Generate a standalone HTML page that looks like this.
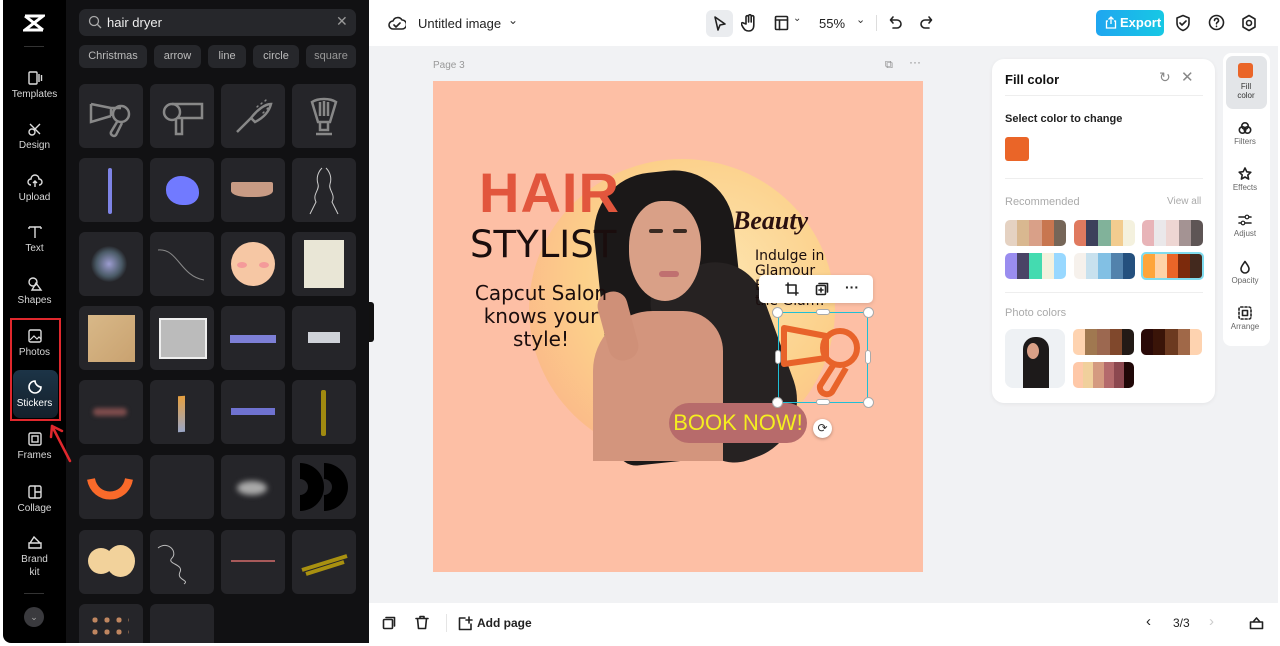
<!DOCTYPE html>
<html><head><meta charset="utf-8"><style>
*{box-sizing:border-box;margin:0;padding:0}
body{width:1280px;height:646px;overflow:hidden;background:#fff;font-family:"Liberation Sans",sans-serif;position:relative}
.a{position:absolute}
#side{left:3px;top:0;width:63px;height:643px;background:#000;border-radius:0 0 0 8px}
#panel{left:66px;top:0;width:303px;height:643px;background:#111113}
.nav{position:absolute;left:0;width:63px;text-align:center;color:#d8d8d8;font-size:10px}
.nav svg{display:block;margin:0 auto 3px}
.tile{position:absolute;width:64px;height:64px;background:#252529;border-radius:6px;overflow:hidden}
.chip{position:absolute;top:45px;height:23px;background:#26272b;border-radius:6px;color:#bbb;font-size:11px;line-height:23px;text-align:center}
#canvas{left:369px;top:46px;width:909px;height:557px;background:#f1f2f4}
#top{left:369px;top:0;width:909px;height:46px;background:#fff}
#bot{left:369px;top:603px;width:909px;height:40px;background:#fff}
.ic{stroke:#222;fill:none;stroke-width:1.6;stroke-linecap:round;stroke-linejoin:round}
.sw{position:absolute;height:26px;border-radius:5px;overflow:hidden;display:flex}
.sw i{flex:1}
.rt{position:absolute;left:0;width:44px;text-align:center;font-size:8px;color:#666}
.rt svg{display:block;margin:0 auto 2px}
</style></head><body>
<div class="a" id="side">
  <svg class="a" style="left:20px;top:13px" width="22" height="20" viewBox="0 0 22 20"><path d="M2 3h18L2 17h18M2 3l18 14" stroke="#fff" stroke-width="3" fill="none"/></svg>
  <div class="a" style="left:21px;top:46px;width:20px;height:1px;background:#333"></div>
  <div class="nav" style="top:70px"><svg width="16" height="16" viewBox="0 0 16 16"><rect x="2" y="2" width="8" height="12" rx="1" stroke="#ddd" fill="none" stroke-width="1.4"/><path d="M12 4v8M14.5 5v6" stroke="#ddd" stroke-width="1.4"/></svg>Templates</div>
  <div class="nav" style="top:121px"><svg width="16" height="16" viewBox="0 0 16 16"><circle cx="5" cy="11" r="3" stroke="#ddd" fill="none" stroke-width="1.4"/><path d="M3 3l10 10M13 3L7 9" stroke="#ddd" stroke-width="1.4"/></svg>Design</div>
  <div class="nav" style="top:173px"><svg width="16" height="16" viewBox="0 0 16 16"><path d="M4 12a3 3 0 010-6 4 4 0 018 0 3 3 0 010 6M8 14V8M6 10l2-2 2 2" stroke="#ddd" fill="none" stroke-width="1.4"/></svg>Upload</div>
  <div class="nav" style="top:224px"><svg width="16" height="16" viewBox="0 0 16 16"><path d="M2 3h12M8 3v11M2 3v2M14 3v2" stroke="#ddd" fill="none" stroke-width="1.4"/></svg>Text</div>
  <div class="nav" style="top:276px"><svg width="16" height="16" viewBox="0 0 16 16"><circle cx="6" cy="6" r="4" stroke="#ddd" fill="none" stroke-width="1.4"/><path d="M9 7l5 7H5z" stroke="#ddd" fill="none" stroke-width="1.4"/></svg>Shapes</div>
  <div class="a" style="left:7px;top:318px;width:51px;height:103px;border:2px solid #e0282d"></div>
  <div class="nav" style="top:328px"><svg width="16" height="16" viewBox="0 0 16 16"><rect x="2" y="2" width="12" height="12" rx="1.5" stroke="#ddd" fill="none" stroke-width="1.4"/><path d="M3 12l4-4 3 3 2-2 2 2" stroke="#ddd" fill="none" stroke-width="1.2"/></svg>Photos</div>
  <div class="a" style="left:10px;top:370px;width:45px;height:48px;border-radius:7px;background:linear-gradient(#1c3447,#14202b)"></div>
  <div class="nav" style="top:379px;color:#fff"><svg width="16" height="16" viewBox="0 0 16 16"><path d="M14 8a6 6 0 11-6-6c0 3 3 6 6 6z" stroke="#fff" fill="none" stroke-width="1.6"/></svg>Stickers</div>
  <div class="nav" style="top:431px"><svg width="16" height="16" viewBox="0 0 16 16"><rect x="2" y="2" width="12" height="12" rx="1.5" stroke="#ddd" fill="none" stroke-width="1.4"/><rect x="5" y="5" width="6" height="6" stroke="#ddd" fill="none" stroke-width="1.4"/></svg>Frames</div>
  <div class="nav" style="top:484px"><svg width="16" height="16" viewBox="0 0 16 16"><rect x="2" y="2" width="12" height="12" rx="1.5" stroke="#ddd" fill="none" stroke-width="1.4"/><path d="M8 2v12M8 8h6" stroke="#ddd" stroke-width="1.4"/></svg>Collage</div>
  <div class="nav" style="top:534px;line-height:13px"><svg width="16" height="16" viewBox="0 0 16 16"><path d="M2 9h12v5H2zM3 9l4-6 6 6" stroke="#ddd" fill="none" stroke-width="1.4"/></svg>Brand<br>kit</div>
  <div class="a" style="left:21px;top:593px;width:20px;height:1px;background:#333"></div>
  <div class="a" style="left:21px;top:607px;width:20px;height:20px;border-radius:50%;background:#3a3a3e;color:#aaa;font-size:9px;text-align:center;line-height:20px">⌄</div>
</div>
<div class="a" id="panel">
  <div class="a" style="left:13px;top:9px;width:277px;height:27px;background:#26272b;border-radius:7px"></div>
  <svg class="a" style="left:22px;top:15px" width="14" height="14" viewBox="0 0 14 14"><circle cx="6" cy="6" r="4.5" stroke="#aaa" fill="none" stroke-width="1.3"/><path d="M9.5 9.5L13 13" stroke="#aaa" stroke-width="1.3"/></svg>
  <div class="a" style="left:41px;top:15px;color:#eee;font-size:13px">hair dryer</div>
  <div class="a" style="left:270px;top:13px;color:#999;font-size:14px">✕</div>
  <div class="chip" style="left:13px;width:68px">Christmas</div>
  <div class="chip" style="left:88px;width:47px">arrow</div>
  <div class="chip" style="left:142px;width:38px">line</div>
  <div class="chip" style="left:187px;width:46px">circle</div>
  <div class="chip" style="left:240px;width:50px;color:#999">square</div>
</div>
<div class="tile" style="left:79px;top:84px"><svg width="64" height="64" viewBox="0 0 64 64" fill="none" stroke="#888" stroke-width="2.5"><path d="M12 20l20 4h10M12 20v18l20-6M32 24v8"/><circle cx="42" cy="30" r="8"/><path d="M38 38l-6 10a3 3 0 005 3l6-12"/></svg></div>
<div class="tile" style="left:150px;top:84px"><svg width="64" height="64" viewBox="0 0 64 64" fill="none" stroke="#888" stroke-width="2.5"><circle cx="22" cy="28" r="8"/><path d="M22 20h30v14H28M26 35v15h6V35"/></svg></div>
<div class="tile" style="left:221px;top:84px"><svg width="64" height="64" viewBox="0 0 64 64" fill="none" stroke="#888" stroke-width="2.5"><path d="M16 48l14-14M30 34c6-8 14-14 20-14-2 8-8 14-16 18z"/><path d="M36 22l1 1M40 19l1 1M44 16l1 1M46 24l1 1M42 28l1 1"/></svg></div>
<div class="tile" style="left:292px;top:84px"><svg width="64" height="64" viewBox="0 0 64 64" fill="none" stroke="#888" stroke-width="2.5"><path d="M20 18c6-4 18-4 24 0l-6 20H26zM28 18v14M32 17v15M36 18v14M28 38v8h8v-8M24 50h16"/></svg></div>
<div class="tile" style="left:79px;top:158px"><div class="a" style="left:29px;top:10px;width:4px;height:46px;background:#7e84e6;border-radius:2px"></div></div>
<div class="tile" style="left:150px;top:158px"><div class="a" style="left:16px;top:18px;width:33px;height:29px;background:#717aff;border-radius:45% 55% 40% 50%"></div></div>
<div class="tile" style="left:221px;top:158px"><div class="a" style="left:10px;top:24px;width:42px;height:15px;background:#c89b84;border-radius:2px 2px 40% 40%"></div></div>
<div class="tile" style="left:292px;top:158px"><svg width="64" height="64" viewBox="0 0 64 64" fill="none" stroke="#ccc" stroke-width="1"><path d="M30 10c-4 4-6 10-4 16s-6 10-2 18l-6 12M34 10c4 4 6 10 4 16s6 10 2 18l6 12"/></svg></div>
<div class="tile" style="left:79px;top:232px"><div class="a" style="left:12px;top:14px;width:36px;height:36px;border-radius:50%;background:radial-gradient(#9c9cd0,#4a5a66 50%,transparent 72%)"></div></div>
<div class="tile" style="left:150px;top:232px"><svg width="64" height="64"><path d="M8 18c20-2 22 26 46 30" stroke="#888" fill="none"/></svg></div>
<div class="tile" style="left:221px;top:232px"><div class="a" style="left:10px;top:10px;width:44px;height:44px;border-radius:50%;background:#f6c7a4"></div><div class="a" style="left:16px;top:30px;width:10px;height:6px;border-radius:50%;background:#f49a9a"></div><div class="a" style="left:38px;top:30px;width:10px;height:6px;border-radius:50%;background:#f49a9a"></div></div>
<div class="tile" style="left:292px;top:232px"><div class="a" style="left:12px;top:8px;width:40px;height:48px;background:#e9e6d6"></div></div>
<div class="tile" style="left:79px;top:306px"><div class="a" style="left:9px;top:9px;width:47px;height:47px;background:linear-gradient(135deg,#d8b888,#c9a270)"></div></div>
<div class="tile" style="left:150px;top:306px"><div class="a" style="left:9px;top:12px;width:48px;height:41px;background:#bbb;border:2px solid #eee"></div></div>
<div class="tile" style="left:221px;top:306px"><div class="a" style="left:9px;top:29px;width:46px;height:8px;background:#7d7fd6"></div></div>
<div class="tile" style="left:292px;top:306px"><div class="a" style="left:16px;top:26px;width:32px;height:11px;background:#cfd2d8"></div></div>
<div class="tile" style="left:79px;top:380px"><div class="a" style="left:14px;top:28px;width:34px;height:8px;background:#7d4c4c;border-radius:5px;filter:blur(2px)"></div></div>
<div class="tile" style="left:150px;top:380px"><div class="a" style="left:28px;top:16px;width:7px;height:36px;background:linear-gradient(#e6a040,#9aa6c6);transform:skewY(-5deg)"></div></div>
<div class="tile" style="left:221px;top:380px"><div class="a" style="left:10px;top:28px;width:44px;height:7px;background:#6f72d0"></div></div>
<div class="tile" style="left:292px;top:380px"><div class="a" style="left:29px;top:10px;width:5px;height:46px;background:#a08a10;border-radius:2px"></div></div>
<div class="tile" style="left:79px;top:455px"><svg width="64" height="64"><path d="M12 24c4 22 34 22 38 0" stroke="#fa6a2a" stroke-width="8" fill="none"/></svg></div>
<div class="tile" style="left:150px;top:455px"></div>
<div class="tile" style="left:221px;top:455px"><div class="a" style="left:16px;top:26px;width:30px;height:14px;border-radius:50%;background:#aaa;filter:blur(3px)"></div></div>
<div class="tile" style="left:292px;top:455px"><svg width="64" height="64"><path d="M8 8a24 24 0 010 48V40a8 8 0 000-16zM32 8a24 24 0 010 48V40a8 8 0 000-16z" fill="#000"/></svg></div>
<div class="tile" style="left:79px;top:530px"><div class="a" style="left:9px;top:18px;width:26px;height:26px;border-radius:50%;background:#f2d29b"></div><div class="a" style="left:27px;top:15px;width:29px;height:32px;border-radius:50%;background:#f2d29b"></div></div>
<div class="tile" style="left:150px;top:530px"><svg width="64" height="64"><path d="M8 18c10-8 20 4 14 10s12 6 8 14 10 8 4 12" stroke="#bbb" fill="none"/></svg></div>
<div class="tile" style="left:221px;top:530px"><div class="a" style="left:10px;top:30px;width:44px;height:2px;background:#a85a5a"></div></div>
<div class="tile" style="left:292px;top:530px"><svg width="64" height="64"><path d="M10 40l45-14M14 44l38-12" stroke="#a89010" stroke-width="4"/></svg></div>
<div class="tile" style="left:79px;top:604px;height:39px;border-radius:6px 6px 0 0"><div class="a" style="left:10px;top:10px;width:40px;height:24px;background:radial-gradient(circle,#c08660 30%,transparent 32%) 0 0/12px 12px"></div></div>
<div class="tile" style="left:150px;top:604px;height:39px;border-radius:6px 6px 0 0"></div>

<div class="a" id="top">
  <svg class="a" style="left:19px;top:15px" width="18" height="16" viewBox="0 0 18 16"><path d="M5 14a4 4 0 010-8 5 5 0 019-1 4 4 0 010 9z M6 10l2 2 4-4" class="ic"/></svg>
  <div class="a" style="left:49px;top:16px;font-size:13px;color:#222">Untitled image</div>
  <div class="a" style="left:139px;top:13px;font-size:12px;color:#333">⌄</div>
  <div class="a" style="left:337px;top:10px;width:27px;height:27px;border-radius:6px;background:#eaecef"></div>
  <svg class="a" style="left:344px;top:15px" width="14" height="17" viewBox="0 0 14 17"><path d="M2 2l10 7-5 1-2 5z" class="ic"/></svg>
  <svg class="a" style="left:372px;top:14px" width="16" height="18" viewBox="0 0 16 18"><path d="M5 10V3a1.3 1.3 0 012.6 0v5V2a1.3 1.3 0 012.6 0v6V3a1.3 1.3 0 012.6 0v8c0 4-2 6-5 6s-4-1-6-4l-1.5-3a1.2 1.2 0 012-1z" class="ic" stroke-width="1.3"/></svg>
  <svg class="a" style="left:405px;top:15px" width="15" height="16" viewBox="0 0 15 16"><rect x="1.5" y="1.5" width="12" height="13" rx="1" class="ic"/><path d="M1.5 5h12M5.5 5v9.5" class="ic"/></svg>
  <div class="a" style="left:424px;top:13px;font-size:10px;color:#333">⌄</div>
  <div class="a" style="left:450px;top:16px;font-size:13px;color:#222">55%</div>
  <div class="a" style="left:487px;top:13px;font-size:11px;color:#333">⌄</div>
  <div class="a" style="left:507px;top:15px;width:1px;height:16px;background:#ddd"></div>
  <svg class="a" style="left:520px;top:15px" width="14" height="16" viewBox="0 0 14 16"><path d="M4 2L1.5 5 4 8M2 5h6a4 4 0 010 8H4" class="ic"/></svg>
  <svg class="a" style="left:550px;top:15px" width="14" height="16" viewBox="0 0 14 16"><path d="M10 2l2.5 3L10 8M12 5H6a4 4 0 000 8h4" class="ic" stroke="#ccc"/></svg>
  <div class="a" style="left:727px;top:10px;width:68px;height:26px;border-radius:5px;background:linear-gradient(90deg,#1fa6f0,#17c8e4);color:#fff;font-size:13px;font-weight:bold;line-height:26px;padding-left:24px">Export</div>
  <svg class="a" style="left:736px;top:16px" width="12" height="13" viewBox="0 0 12 13"><path d="M3 5H1.5v7h9V5H9M6 1v7M3.5 3.5L6 1l2.5 2.5" stroke="#fff" fill="none" stroke-width="1.3"/></svg>
  <svg class="a" style="left:806px;top:14px" width="16" height="18" viewBox="0 0 16 18"><path d="M8 1.5l6 2.5v5c0 4-3 6.5-6 7.5-3-1-6-3.5-6-7.5V4zM5 9l2 2 4-4" class="ic"/></svg>
  <svg class="a" style="left:839px;top:14px" width="17" height="17" viewBox="0 0 17 17"><circle cx="8.5" cy="8.5" r="7" class="ic"/><path d="M6.5 6.5a2 2 0 113 1.7c-.7.4-1 .8-1 1.6M8.5 12.2v.3" class="ic"/></svg>
  <svg class="a" style="left:872px;top:14px" width="16" height="18" viewBox="0 0 16 18"><path d="M8 1.5l6 3.5v8L8 16.5 2 13V5z" class="ic"/><circle cx="8" cy="9" r="2.5" class="ic"/></svg>
</div>
<div class="a" id="canvas">
  <div class="a" style="left:64px;top:14px;font-size:10px;color:#999">Page 3</div>
  <div class="a" style="left:516px;top:13px;font-size:11px;color:#888">⧉</div>
  <div class="a" style="left:540px;top:9px;font-size:12px;color:#888">···</div>
  <div class="a" style="left:0;top:256px;width:5px;height:40px;background:#111;border-radius:0 3px 3px 0"></div>
  <div class="a" style="left:64px;top:35px;width:490px;height:491px;background:#fdbfa5;overflow:hidden">
    <div class="a" style="left:96px;top:78px;width:306px;height:300px;border-radius:50%;background:radial-gradient(circle at 60% 40%,#fde5b0,#fcd08a 50%,#fbb889 80%)"></div>
    <div class="a" style="left:170px;top:90px;width:140px;height:290px;background:#1b1818;border-radius:60px 60px 20px 20px;transform:rotate(-6deg)"></div>
    <div class="a" style="left:240px;top:180px;width:110px;height:200px;background:#262222;border-radius:30px 50px 60px 40px;transform:rotate(-20deg)"></div>
    <div class="a" style="left:196px;top:120px;width:72px;height:100px;background:#d9a087;border-radius:45% 45% 50% 50%"></div>
    <div class="a" style="left:160px;top:230px;width:130px;height:150px;background:#d3957d;border-radius:60px 40px 0 0"></div>
    <div class="a" style="left:170px;top:210px;width:30px;height:70px;background:#cf9078;border-radius:14px;transform:rotate(-15deg)"></div>
    <div class="a" style="left:216px;top:148px;width:14px;height:4px;background:#3a2a22;border-radius:2px"></div>
    <div class="a" style="left:240px;top:148px;width:14px;height:4px;background:#3a2a22;border-radius:2px"></div>
    <div class="a" style="left:226px;top:190px;width:20px;height:6px;background:#c07070;border-radius:3px"></div>
    <div class="a" style="left:46px;top:82px;font-size:56px;font-weight:bold;color:#e2563d;letter-spacing:1px;line-height:60px">HAIR</div>
    <div class="a" style="left:37px;top:143px;font-family:'DejaVu Sans',sans-serif;font-size:37px;color:#1a0d0d;line-height:42px">STYLIST</div>
    <div class="a" style="left:28px;top:201px;width:160px;text-align:center;font-family:'DejaVu Sans',sans-serif;font-size:20px;color:#1a0d0d;line-height:23px">Capcut Salon knows your style!</div>
    <div class="a" style="left:300px;top:125px;font-family:'Liberation Serif',serif;font-style:italic;font-weight:bold;font-size:26px;color:#2a1010">Beauty</div>
    <div class="a" style="left:322px;top:168px;font-family:'DejaVu Sans',sans-serif;font-size:14px;color:#1a0d0d;line-height:15px">Indulge in<br>Glamour<br>Em<br>the Glam!</div>
    <div class="a" style="left:236px;top:322px;width:138px;height:40px;border-radius:20px;background:#b76b6b;color:#f5ee20;font-size:22px;line-height:40px;text-align:center">BOOK NOW!</div>
  </div>
  <div class="a" style="left:390px;top:229px;width:114px;height:28px;background:#fff;border-radius:5px;box-shadow:0 1px 4px rgba(0,0,0,.15)"></div>
  <svg class="a" style="left:416px;top:236px" width="14" height="14" viewBox="0 0 14 14"><path d="M3 1v10h10M1 3h10v10" class="ic" stroke-width="1.4"/></svg>
  <svg class="a" style="left:446px;top:236px" width="14" height="14" viewBox="0 0 14 14"><rect x="1.5" y="3.5" width="9" height="9" rx="1" class="ic" stroke-width="1.4"/><path d="M4 1.5h8.5V10M6 6v4M4 8h4" class="ic" stroke-width="1.4"/></svg>
  <div class="a" style="left:476px;top:233px;font-size:14px;color:#222;font-weight:bold">···</div>
  <div class="a" style="left:409px;top:266px;width:90px;height:91px;border:1.5px solid #1fbfd6"></div>
  <svg class="a" style="left:409px;top:266px" width="90" height="91" viewBox="0 0 90 91" fill="none" stroke="#e8632a" stroke-width="6" stroke-linejoin="round"><path d="M6 16l42 8v22L6 52z"/><circle cx="62" cy="36" r="17"/><path d="M56 52l-14 22a7 7 0 0012 6l14-24"/></svg>
  <div class="a" style="left:403px;top:261px;width:11px;height:11px;border-radius:50%;background:#fff;border:1px solid #aaa"></div>
  <div class="a" style="left:494px;top:261px;width:11px;height:11px;border-radius:50%;background:#fff;border:1px solid #aaa"></div>
  <div class="a" style="left:403px;top:351px;width:11px;height:11px;border-radius:50%;background:#fff;border:1px solid #aaa"></div>
  <div class="a" style="left:494px;top:351px;width:11px;height:11px;border-radius:50%;background:#fff;border:1px solid #aaa"></div>
  <div class="a" style="left:447px;top:263px;width:14px;height:6px;border-radius:3px;background:#fff;border:1px solid #aaa"></div>
  <div class="a" style="left:447px;top:353px;width:14px;height:6px;border-radius:3px;background:#fff;border:1px solid #aaa"></div>
  <div class="a" style="left:406px;top:304px;width:6px;height:14px;border-radius:3px;background:#fff;border:1px solid #aaa"></div>
  <div class="a" style="left:496px;top:304px;width:6px;height:14px;border-radius:3px;background:#fff;border:1px solid #aaa"></div>
  <div class="a" style="left:444px;top:373px;width:19px;height:19px;border-radius:50%;background:#fff;box-shadow:0 1px 3px rgba(0,0,0,.3);font-size:12px;text-align:center;line-height:19px;color:#333">⟳</div>
  <div class="a" style="left:623px;top:13px;width:223px;height:344px;background:#fff;border-radius:12px;box-shadow:0 1px 4px rgba(0,0,0,.06)">
    <div class="a" style="left:13px;top:13px;font-size:13px;font-weight:bold;color:#111">Fill color</div>
    <div class="a" style="left:167px;top:10px;font-size:14px;color:#888">↻</div>
    <div class="a" style="left:189px;top:9px;font-size:15px;color:#888">✕</div>
    <div class="a" style="left:13px;top:36px;width:198px;height:1px;background:#eee"></div>
    <div class="a" style="left:13px;top:54px;font-size:11px;font-weight:bold;color:#222">Select color to change</div>
    <div class="a" style="left:13px;top:78px;width:24px;height:24px;border-radius:3px;background:#ea6528"></div>
    <div class="a" style="left:13px;top:119px;width:198px;height:1px;background:#eee"></div>
    <div class="a" style="left:13px;top:137px;font-size:11px;color:#aaa">Recommended</div>
    <div class="a" style="left:175px;top:137px;font-size:10px;color:#aaa">View all</div>
    <div class="sw" style="left:13px;top:161px;width:61px"><i style="background:#e5d2c2"></i><i style="background:#d9b890"></i><i style="background:#d9a088"></i><i style="background:#c87650"></i><i style="background:#766658"></i></div>
    <div class="sw" style="left:82px;top:161px;width:61px"><i style="background:#e07a5f"></i><i style="background:#3d405b"></i><i style="background:#81b29a"></i><i style="background:#f2cc8f"></i><i style="background:#f4f1de"></i></div>
    <div class="sw" style="left:150px;top:161px;width:61px"><i style="background:#e8b4b8"></i><i style="background:#eae8ea"></i><i style="background:#eed6d3"></i><i style="background:#a49393"></i><i style="background:#5e5555"></i></div>
    <div class="sw" style="left:13px;top:194px;width:61px"><i style="background:#9a8def"></i><i style="background:#4a4466"></i><i style="background:#44dbb0"></i><i style="background:#f4f1de"></i><i style="background:#98d8ff"></i></div>
    <div class="sw" style="left:82px;top:194px;width:61px"><i style="background:#f6f1ec"></i><i style="background:#c8e1ee"></i><i style="background:#82c0e4"></i><i style="background:#5282ac"></i><i style="background:#24507e"></i></div>
    <div class="sw" style="left:149px;top:193px;width:63px;height:28px;border:2px solid #7fdcef"><i style="background:#fea53a"></i><i style="background:#fed3a8"></i><i style="background:#ea6528"></i><i style="background:#7c2a0c"></i><i style="background:#43291e"></i></div>
    <div class="a" style="left:13px;top:233px;width:198px;height:1px;background:#eee"></div>
    <div class="a" style="left:13px;top:248px;font-size:11px;color:#aaa">Photo colors</div>
    <div class="a" style="left:13px;top:270px;width:60px;height:59px;border-radius:8px;background:#eef1f4;overflow:hidden"><div class="a" style="left:18px;top:8px;width:26px;height:52px;border-radius:12px 12px 0 0;background:#1d1a1a"></div><div class="a" style="left:22px;top:14px;width:12px;height:16px;border-radius:50%;background:#d9a087"></div></div>
    <div class="sw" style="left:81px;top:270px;width:61px"><i style="background:#fed3b0"></i><i style="background:#a07850"></i><i style="background:#9c6850"></i><i style="background:#80482c"></i><i style="background:#231a16"></i></div>
    <div class="sw" style="left:149px;top:270px;width:61px"><i style="background:#2a0a08"></i><i style="background:#3a1408"></i><i style="background:#6c3a20"></i><i style="background:#a06848"></i><i style="background:#fed3b0"></i></div>
    <div class="sw" style="left:81px;top:303px;width:61px"><i style="background:#fec8a8"></i><i style="background:#f0d09c"></i><i style="background:#d49a80"></i><i style="background:#b46a6c"></i><i style="background:#8c4850"></i><i style="background:#200808"></i></div>
  </div>
  <div class="a" style="left:854px;top:7px;width:47px;height:293px;background:#fff;border-radius:8px">
    <div class="a" style="left:3px;top:3px;width:41px;height:53px;background:#e3e5e8;border-radius:7px"></div>
    <div class="a" style="left:15px;top:10px;width:15px;height:15px;border-radius:3px;background:#ea6528"></div>
    <div class="rt" style="top:29px;left:1px;color:#333;line-height:9px">Fill<br>color</div>
    <div class="rt" style="top:68px"><svg width="14" height="14" viewBox="0 0 14 14"><circle cx="7" cy="5" r="3.2" class="ic" stroke-width="1.2"/><circle cx="4.5" cy="9" r="3.2" class="ic" stroke-width="1.2"/><circle cx="9.5" cy="9" r="3.2" class="ic" stroke-width="1.2"/></svg>Filters</div>
    <div class="rt" style="top:114px"><svg width="14" height="14" viewBox="0 0 14 14"><path d="M7 1l1.8 3.8 4 .5-3 2.8.8 4L7 10 3.4 12l.8-4-3-2.8 4-.5z" class="ic" stroke-width="1.2"/></svg>Effects</div>
    <div class="rt" style="top:160px"><svg width="14" height="14" viewBox="0 0 14 14"><path d="M1 4h12M1 10h12" class="ic" stroke-width="1.2"/><circle cx="9" cy="4" r="1.8" fill="#fff" stroke="#222" stroke-width="1.2"/><circle cx="5" cy="10" r="1.8" fill="#fff" stroke="#222" stroke-width="1.2"/></svg>Adjust</div>
    <div class="rt" style="top:207px"><svg width="14" height="14" viewBox="0 0 14 14"><path d="M7 1.5c2 3 4 5 4 7.5a4 4 0 01-8 0c0-2.5 2-4.5 4-7.5z" class="ic" stroke-width="1.2"/></svg>Opacity</div>
    <div class="rt" style="top:253px"><svg width="14" height="14" viewBox="0 0 14 14"><rect x="1" y="1" width="12" height="12" rx="2" class="ic" stroke-width="1.2" stroke-dasharray="2 2"/><rect x="4.5" y="4.5" width="5" height="5" class="ic" stroke-width="1.2"/></svg>Arrange</div>
  </div>
</div>
<div class="a" id="bot">
  <svg class="a" style="left:13px;top:13px" width="14" height="14" viewBox="0 0 14 14"><rect x="1.5" y="3.5" width="9" height="9" rx="1" class="ic" stroke-width="1.4"/><path d="M4 1.5h8.5V10" class="ic" stroke-width="1.4"/></svg>
  <svg class="a" style="left:46px;top:12px" width="14" height="15" viewBox="0 0 14 15"><path d="M1 3.5h12M5 3.5V1.5h4v2M2.5 3.5l1 10h7l1-10" class="ic" stroke-width="1.4"/></svg>
  <div class="a" style="left:77px;top:11px;width:1px;height:18px;background:#e5e5e5"></div>
  <svg class="a" style="left:89px;top:13px" width="15" height="15" viewBox="0 0 15 15"><path d="M13 8v5.5H1.5V2H7M11 1v6M8 4h6" class="ic" stroke-width="1.4"/></svg>
  <div class="a" style="left:108px;top:13px;font-size:12px;font-weight:bold;color:#222">Add page</div>
  <div class="a" style="left:777px;top:10px;font-size:15px;color:#222">‹</div>
  <div class="a" style="left:804px;top:13px;font-size:12px;color:#222">3/3</div>
  <div class="a" style="left:840px;top:10px;font-size:15px;color:#ccc">›</div>
  <svg class="a" style="left:880px;top:13px" width="15" height="14" viewBox="0 0 15 14"><path d="M1.5 6h12v6.5h-12zM4 6l3.5-4 3.5 4" class="ic" stroke-width="1.4"/></svg>
</div>
<svg class="a" style="left:45px;top:420px;z-index:5" width="30" height="45" viewBox="0 0 30 45"><path d="M25 41L7 6M7 6l-1 11M7 6l10 5" stroke="#e0282d" stroke-width="2.5" fill="none" stroke-linecap="round"/></svg>
</body></html>
